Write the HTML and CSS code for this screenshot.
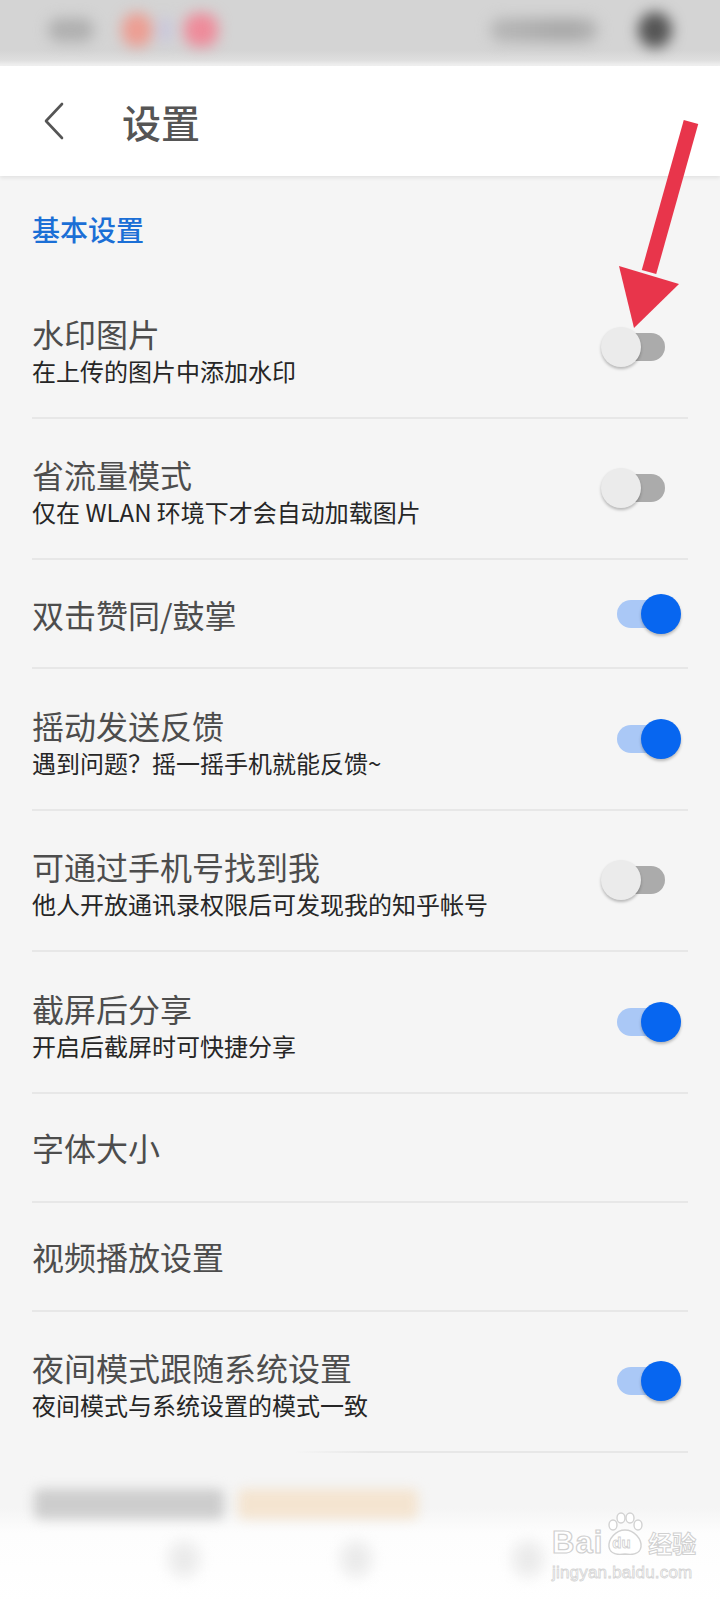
FILE: index.html
```html
<html>
<head>
  <meta charset="utf-8">
  <link rel="stylesheet" href="styles.css">
</head>
<body>
  <div class="page">
    <div class="status-bar">
      <div class="status-left">
        <span class="blob blob-gray"></span>
        <span class="blob blob-salmon"></span>
        <span class="blob blob-lilac"></span>
        <span class="blob blob-pink"></span>
      </div>
      <div class="status-right">
        <span class="blob blob-wide"></span>
        <span class="blob blob-dark"></span>
      </div>
    </div>

    <header class="top-bar">
      <svg class="back" width="24" height="38" viewBox="0 0 24 38">
        <path d="M20 2 L4 19 L20 36" fill="none" stroke="#555" stroke-width="2.6" stroke-linecap="round" stroke-linejoin="round"/>
      </svg>
      <h1>设置</h1>
    </header>

    <main class="settings">
      <div class="section-title">基本设置</div>
      <ul class="list">
        <li class="item item-two">
          <div class="item-text">
            <div class="name">水印图片</div>
            <div class="desc">在上传的图片中添加水印</div>
          </div>
          <span class="switch"></span>
        </li>
        <li class="item item-two">
          <div class="item-text">
            <div class="name">省流量模式</div>
            <div class="desc">仅在 WLAN 环境下才会自动加载图片</div>
          </div>
          <span class="switch"></span>
        </li>
        <li class="item">
          <div class="item-text">
            <div class="name">双击赞同/鼓掌</div>
          </div>
          <span class="switch on"></span>
        </li>
        <li class="item item-two">
          <div class="item-text">
            <div class="name">摇动发送反馈</div>
            <div class="desc">遇到问题？摇一摇手机就能反馈~</div>
          </div>
          <span class="switch on"></span>
        </li>
        <li class="item item-two">
          <div class="item-text">
            <div class="name">可通过手机号找到我</div>
            <div class="desc">他人开放通讯录权限后可发现我的知乎帐号</div>
          </div>
          <span class="switch"></span>
        </li>
        <li class="item item-two">
          <div class="item-text">
            <div class="name">截屏后分享</div>
            <div class="desc">开启后截屏时可快捷分享</div>
          </div>
          <span class="switch on"></span>
        </li>
        <li class="item">
          <div class="item-text">
            <div class="name">字体大小</div>
          </div>
        </li>
        <li class="item">
          <div class="item-text">
            <div class="name">视频播放设置</div>
          </div>
        </li>
        <li class="item item-two item-last">
          <div class="item-text">
            <div class="name">夜间模式跟随系统设置</div>
            <div class="desc">夜间模式与系统设置的模式一致</div>
          </div>
          <span class="switch on"></span>
        </li>
      </ul>
    </main>

    <div class="bottom-blur">
      <div class="blur-bars">
        <span class="blur-bar bar-gray"></span>
        <span class="blur-bar bar-beige"></span>
      </div>
      <div class="blur-icons">
        <span class="blur-icon"></span>
        <span class="blur-icon"></span>
        <span class="blur-icon"></span>
      </div>
    </div>

    <!-- watermark sits over the bottom bar -->
    <div class="watermark">
      <div class="wm-logo">
        <span class="wm-bai">Bai</span>
        <span class="wm-paw">
          <svg width="42" height="46" viewBox="0 0 42 46">
            <g fill="#fff" stroke="#d2d2d2" stroke-width="1.4">
              <ellipse cx="9" cy="13" rx="4" ry="5"/>
              <ellipse cx="17" cy="6" rx="4" ry="5"/>
              <ellipse cx="26" cy="6" rx="4" ry="5"/>
              <ellipse cx="34" cy="13" rx="4" ry="5"/>
              <path d="M21 18 C30 18 38 27 37 35 C36 42 28 43 21 42 C14 43 6 42 5 35 C4 27 12 18 21 18 Z"/>
            </g>
          </svg>
          <span class="wm-du">du</span>
        </span>
        <span class="wm-jy">经验</span>
      </div>
      <div class="wm-url">jingyan.baidu.com</div>
    </div>

    <svg class="arrow" width="110" height="230" viewBox="0 0 110 230">
      <line x1="91" y1="12" x2="49" y2="162" stroke="#e8354b" stroke-width="15"/>
      <polygon points="19,156 79,174 34,218" fill="#e8354b"/>
    </svg>
  </div>
</body>
</html>
```

FILE: styles.css
```css
body {
  margin: 0;
  padding: 0;
  background: #f5f5f5;
  font-family: "Noto Sans CJK SC", "Noto Sans", sans-serif;
}

.page {
  position: relative;
  width: 720px;
  height: 1600px;
  overflow: hidden;
  background: #f5f5f5;
}

/* status bar (blurred in the screenshot) */
.status-bar {
  height: 66px;
  display: flex;
  justify-content: space-between;
  align-items: center;
  padding: 0 48px 6px 48px;
  box-sizing: border-box;
  background: linear-gradient(#d4d4d4 0, #d4d4d4 50px, #dedede 60px, #f2f2f2 66px);
}

.status-left,
.status-right {
  display: flex;
  align-items: center;
  filter: blur(7px);
}

.blob {
  display: block;
  border-radius: 14px;
}

.blob-gray {
  width: 46px;
  height: 24px;
  background: #b0b0b0;
  margin-right: 28px;
}

.blob-salmon {
  width: 30px;
  height: 34px;
  background: #ec9d92;
}

.blob-lilac {
  width: 14px;
  height: 26px;
  background: #c9c6dc;
  margin: 0 12px 0 6px;
}

.blob-pink {
  width: 34px;
  height: 34px;
  background: #ee8b9a;
}

.blob-wide {
  width: 108px;
  height: 24px;
  background: linear-gradient(90deg, #b8b8b8, #a8a8a8 70%, #b6b6b6);
  margin-right: 40px;
}

.blob-dark {
  width: 34px;
  height: 36px;
  border-radius: 50%;
  background: #555;
}

/* top bar */
.top-bar {
  height: 110px;
  display: flex;
  align-items: center;
  padding-left: 42px;
  background: #fff;
  box-shadow: 0 2px 4px rgba(0, 0, 0, 0.08);
  position: relative;
}

.top-bar h1 {
  margin: 0 0 0 56px;
  font-size: 39px;
  font-weight: 500;
  color: #555;
  line-height: 1;
}

/* settings list */
.section-title {
  height: 101px;
  box-sizing: border-box;
  padding: 4px 0 0 32px;
  display: flex;
  align-items: center;
  font-size: 28px;
  font-weight: 500;
  color: #1b6fd6;
}

.list {
  list-style: none;
  margin: 0 32px;
  padding: 0;
}

.item {
  height: 109px;
  box-sizing: border-box;
  display: flex;
  align-items: center;
  justify-content: space-between;
  padding-right: 7px;
  border-bottom: 2px solid #e7e7e7;
}

.item-two {
  height: 141.5px;
}

.item-two .item-text {
  padding-top: 8px;
}

.item-last {
  border-bottom: 2px solid transparent;
  border-image: linear-gradient(90deg, rgba(231, 231, 231, 0) 40%, #e7e7e7 52%) 1;
}

.name {
  font-size: 32px;
  line-height: 40px;
  color: #4d4d4d;
}

.desc {
  font-size: 24px;
  line-height: 36px;
  color: #262626;
}

/* switch */
.switch {
  position: relative;
  width: 80px;
  height: 40px;
  flex-shrink: 0;
}

.switch::before {
  content: "";
  position: absolute;
  left: 16px;
  top: 6px;
  width: 48px;
  height: 28px;
  border-radius: 14px;
  background: #ababab;
}

.switch::after {
  content: "";
  position: absolute;
  left: 0;
  top: 0;
  width: 40px;
  height: 40px;
  border-radius: 50%;
  background: #ebebeb;
  box-shadow: 0 2px 3px rgba(0, 0, 0, 0.25);
}

.switch.on::before {
  background: #aac8f6;
}

.switch.on::after {
  left: 40px;
  background: #0766f0;
}

/* blurred bottom area */
.bottom-blur {
  height: 151px;
  background: linear-gradient(#f5f5f5 0, #f5f5f5 55px, #fdfdfd 80px, #fff 100%);
}

.blur-bars {
  display: flex;
  gap: 14px;
  padding: 36px 0 0 34px;
  filter: blur(6px);
}

.blur-bar {
  display: block;
  height: 30px;
  border-radius: 6px;
}

.bar-gray {
  width: 190px;
  background: #cdcdcd;
}

.bar-beige {
  width: 180px;
  background: #f4e4d0;
}

.blur-icons {
  display: flex;
  gap: 140px;
  padding: 22px 0 0 168px;
  filter: blur(7px);
}

.blur-icon {
  display: block;
  width: 32px;
  height: 36px;
  border-radius: 50%;
  background: #ebebeb;
}

/* baidu watermark */
.watermark {
  position: absolute;
  left: 552px;
  top: 1512px;
  color: #fff;
  font-family: "Liberation Sans", Arial, sans-serif;
}

.wm-logo {
  display: flex;
  align-items: flex-end;
}

.wm-bai {
  font-size: 31px;
  font-weight: bold;
  line-height: 1;
  -webkit-text-stroke: 1.2px #d0d0d0;
  letter-spacing: 1px;
}

.wm-paw {
  position: relative;
  width: 42px;
  height: 46px;
  margin-left: 1px;
}

.wm-paw svg {
  display: block;
}

.wm-du {
  position: absolute;
  left: 8px;
  top: 22px;
  font-size: 15px;
  font-weight: bold;
  color: #fff;
  -webkit-text-stroke: 0.8px #d0d0d0;
}

.wm-jy {
  font-family: "Noto Sans CJK SC", sans-serif;
  font-size: 24px;
  font-weight: bold;
  line-height: 1.2;
  -webkit-text-stroke: 1px #d0d0d0;
  margin-left: 2px;
}

.wm-url {
  font-size: 17px;
  line-height: 22px;
  margin-top: 4px;
  letter-spacing: 0.2px;
  -webkit-text-stroke: 0.8px #d4d4d4;
}

/* red annotation arrow */
.arrow {
  position: absolute;
  left: 600px;
  top: 110px;
}
```
